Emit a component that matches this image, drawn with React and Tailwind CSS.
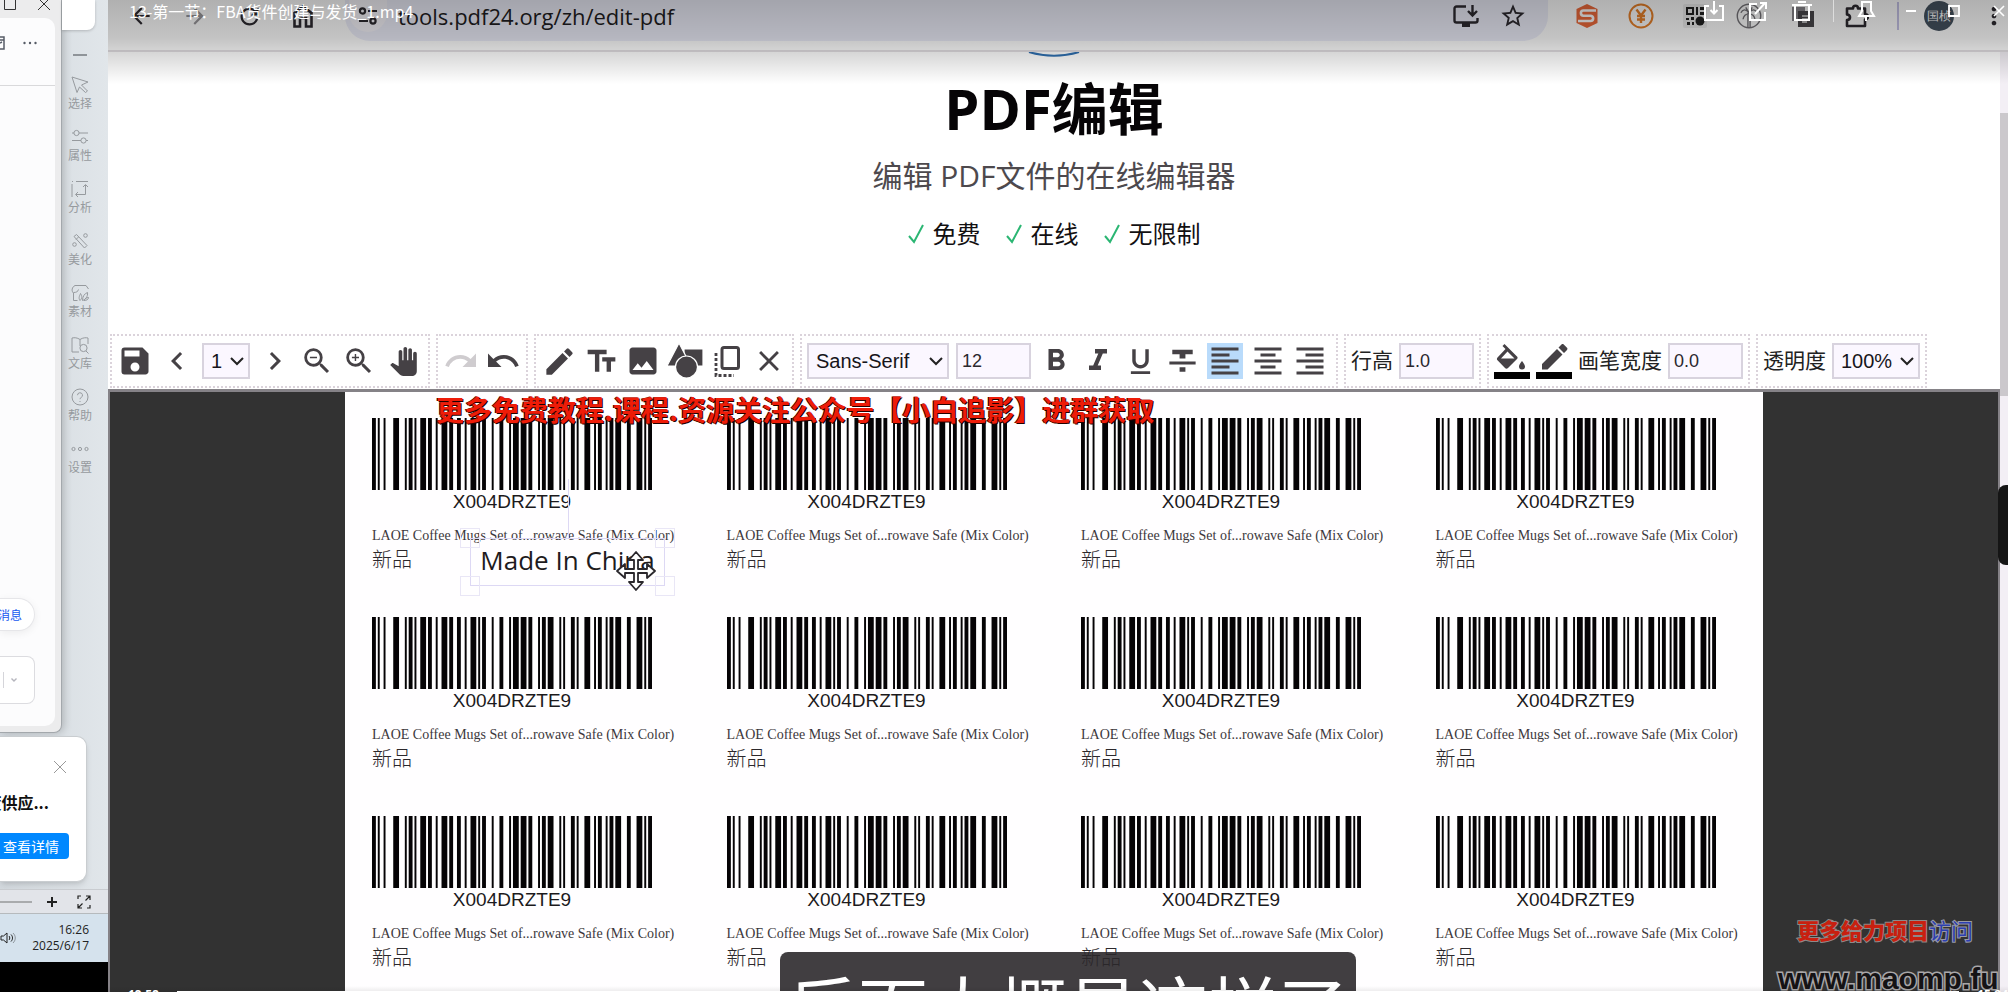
import React from "react";
import {
  MdSave, MdChevronLeft, MdChevronRight, MdZoomOut, MdZoomIn, MdRedo, MdUndo, MdEdit,
  MdTextFields, MdImage, MdClose, MdFormatBold, MdFormatItalic, MdFormatUnderlined,
  MdFormatStrikethrough, MdFormatAlignLeft, MdFormatAlignCenter, MdFormatAlignRight, MdPanTool,
  MdArrowBack, MdArrowForward, MdRefresh, MdStarBorder, MdMoreVert,
} from "react-icons/md";

const UI = "font-['Open_Sans','Noto_Sans_CJK_SC',sans-serif]";

/* ---------- left desktop strip ---------- */

const tools = [
  { label: "选择", icon: <path d="M2 2 18 7 11.500 10 17.500 16 15.500 17.500 9.500 12 7 17.500Z" /> },
  { label: "属性", icon: <><circle cx="6.500" cy="6" r="2.600" /><circle cx="13.500" cy="13.500" r="2.600" /><path d="M2 6h2M9 6h9M2 13.500h9M16 13.500h2" /></> },
  { label: "分析", icon: <><path d="M2 5v13M6 2.500h12M2 2.500h1M15.500 6v9.500H6M13 8l2.500-2.500L18 8M8 13l-2.500 2.500L8 18" /></> },
  { label: "美化", icon: <><path d="M4 5.500 6.500 3.500 17 14.500 14.500 17Z" /><path d="M8.500 6 6 8.500" /><circle cx="15.500" cy="4.500" r="1.800" /><circle cx="4.500" cy="13.500" r="1.800" /></> },
  { label: "素材", icon: <><path d="M3.500 17.500V10C1 8 2 4 5 2.500h11l2.500 3.500M3.500 9.500c3 0 4.500-1 5-3M7.500 17.500H3.500" /><path d="M10 17.500c-2-3 0-5 .5-7 2 3 1.500 5-.5 7ZM12.500 17.500c0-4 2-7 5-8 .5 4-2 7-5 8ZM14 17.500c1-2 2.500-3 4.500-3 0 2-2 3-4.500 3" /></> },
  { label: "文库", icon: <><path d="M10 4.500C7 2.500 4.500 2.500 2 3v14h7M10 4.500C13 2.500 16 2.500 18 3v6M10 4.500V11" /><circle cx="13.500" cy="13" r="3.600" /><path d="m16 16 2.500 2.500" /></> },
  { label: "帮助", icon: <><circle cx="10" cy="10" r="8" /><path d="M7.500 8.200a2.500 2.500 0 1 1 3.600 2.300c-.8.500-1.100.900-1.100 1.700M10 14v1" /></> },
  { label: "设置", icon: <><circle cx="3.500" cy="10" r="1.600" /><circle cx="10" cy="10" r="1.600" /><circle cx="16.500" cy="10" r="1.600" /></> },
];

function DesktopStrip() {
  return (
    <aside className="flex w-[108px] shrink-0 flex-col overflow-hidden bg-linear-to-r from-[#d3d9de] to-[#e1e6ea] font-['Noto_Sans_CJK_SC',sans-serif]">
      <div className="flex min-h-0 flex-1">
        <div className="flex w-[62px] shrink-0 flex-col rounded-br-lg border-r border-b border-[#a3a8ac] bg-[#ececed] pr-[6px] pb-[6px] shadow-[2px_0_8px_#0003]">
          <div className="flex h-[18px] shrink-0 items-start justify-between pr-[5px] pl-1 text-[#333]">
            <svg className="h-3 w-3" viewBox="0 0 12 12" fill="none" stroke="currentColor"><path d="M.5 0v9.500h11V0" /></svg>
            <svg className="h-3 w-3" viewBox="0 0 12 12" fill="none" stroke="currentColor"><path d="m0-2 12 12M12-2 0 10" /></svg>
          </div>
          <div className="flex flex-1 flex-col rounded-r-[10px] bg-[#fcfcfd]">
            <div className="flex h-[68px] items-center border-b border-[#d9d9db] pb-[18px]">
              <svg className="h-4 w-[6px] text-[#555b66]" viewBox="0 0 6 16" fill="none" stroke="currentColor" strokeWidth="1.500"><path d="M0 2h4v12H0M0 5h4M0 8l2-1" /></svg>
              <svg className="ml-4 h-4 w-4 text-[#555b66]" viewBox="0 0 16 16" fill="currentColor"><circle cx="2.500" cy="8" r="1.200" /><circle cx="8" cy="8" r="1.200" /><circle cx="13.500" cy="8" r="1.200" /></svg>
            </div>
            <div className="flex-1" />
            <button className="mb-[25px] flex h-[33px] w-[35px] items-center justify-end rounded-r-full border border-l-0 border-[#e6e6e9] bg-white pr-3 text-xs whitespace-nowrap text-[#1558f0] shadow-[0_2px_8px_#0001]">消息</button>
            <div className="mb-[22px] flex h-[48px] w-[35px] items-center rounded-r-lg border border-l-0 border-[#dcdce0] bg-white">
              <span className="ml-[3px] h-4 w-px bg-[#d5d5da]" />
              <svg className="ml-[7px] h-[6px] w-[6px] text-[#b5b5bd]" viewBox="0 0 6 6" fill="none" stroke="currentColor" strokeWidth="1.400"><path d="m.5 1.500 2.500 2.500L5.500 1.500" /></svg>
            </div>
          </div>
        </div>
        <div className="flex flex-1 flex-col items-start">
          <div className="h-[30px] w-[33px] shrink-0 rounded-br-lg bg-white shadow-[0_1px_3px_#0003]" />
          <span className="mt-6 ml-[11px] h-[2px] w-[14px] shrink-0 bg-[#8f9499]" />
          <nav className="mt-[19px] flex flex-col pl-[6px]">
            {tools.map((t) => (
              <button key={t.label} className="flex h-[52px] w-6 flex-col items-center text-xs leading-4 whitespace-nowrap text-[#969a9e]">
                <svg className="h-5 w-5 shrink-0" viewBox="0 0 20 20" fill="none" stroke="currentColor">{t.icon}</svg>
                {t.label}
              </button>
            ))}
          </nav>
        </div>
      </div>
      <div className="mt-[3px] flex h-[146px] w-[87px] shrink-0 flex-col overflow-hidden rounded-r-[10px] border border-l-0 border-[#c9cdd0] bg-white pt-[23px] shadow-md">
        <button aria-label="关闭" className="ml-[53px] h-[14px] w-[14px] text-[#999]">
          <svg viewBox="0 0 14 14" fill="none" stroke="currentColor"><path d="m1 1 12 12M13 1 1 13" /></svg>
        </button>
        <div className="mt-4 flex w-[49px] justify-end text-base leading-6 font-bold whitespace-nowrap text-[#111]">度供应...</div>
        <button className="mt-[19px] h-[26px] w-[69px] rounded-r bg-[#0088ff] pl-[3px] text-left text-sm whitespace-nowrap text-white">查看详情</button>
      </div>
      <div className="mt-[7px] flex h-[25px] shrink-0 items-center border-t border-b border-[#b6babd] border-t-[#c9ccd0] bg-[#e2e4e9] text-[#222]">
        <span className="h-[2px] w-8 bg-[#a9abad]" />
        <svg className="ml-[15px] h-[10px] w-[10px]" viewBox="0 0 10 10" stroke="currentColor" strokeWidth="2"><path d="M0 5h10M5 0v10" /></svg>
        <svg className="ml-[20px] h-[14px] w-[14px]" viewBox="0 0 14 14" fill="none" stroke="currentColor" strokeWidth="1.200"><path d="M1 4V1h3M9 1h4v4M13 1 8.500 5.500M1 9v4h4M1 13l4.500-4.500M10 13h3v-3" /></svg>
      </div>
      <div className={`flex h-[48px] shrink-0 items-center justify-between bg-[#d5e2ed] pr-[19px] text-[#222] ${UI}`}>
        <svg className="h-[14px] w-4" viewBox="0 0 16 14" fill="none" stroke="currentColor"><path d="M1 5h2.500L7 2v10L3.500 9H1ZM9 5c1 1 1 3 0 4M11 3.500c2 2 2 5 0 7" /><path opacity=".4" d="M13 2c3 3 3 7 0 10" /></svg>
        <div className="text-right text-[12px] leading-4 whitespace-nowrap"><div>16:26</div><div>2025/6/17</div></div>
      </div>
      <div className="h-[30px] shrink-0 bg-black" />
    </aside>
  );
}

/* ---------- browser bar ---------- */

function NavButton({ label, children, className = "" }) {
  return <button aria-label={label} className={`flex h-8 w-[54px] items-center justify-center ${className}`}>{children}</button>;
}

function BrowserBar() {
  return (
    <header className="flex h-[52px] shrink-0 items-start border-b-2 border-[#e4e0e4] bg-white pl-[6px] text-[#2d2a30]">
      <NavButton label="后退"><MdArrowBack size={26} /></NavButton>
      <NavButton label="前进" className="text-[#9a989c]"><MdArrowForward size={26} /></NavButton>
      <NavButton label="刷新"><MdRefresh size={27} /></NavButton>
      <NavButton label="主页">
        <svg className="h-6 w-6" viewBox="0 0 24 24" fill="none" stroke="currentColor" strokeWidth="2.600"><path d="M3.500 22.500V9L12 2.500 20.500 9v13.500H15V14H9v8.500Z" /></svg>
      </NavButton>
      <div className="ml-[15px] flex h-[41px] flex-1 items-center rounded-b-[25px] bg-[#edeefa] pb-[9px] pl-1">
        <span className="flex h-8 w-[38px] items-center justify-center rounded-b-full bg-[#f7f5fb]">
          <svg className="h-5 w-5" viewBox="0 0 20 20" fill="none" stroke="currentColor" strokeWidth="2.200"><circle cx="4.500" cy="5" r="2.600" /><path d="M10 5h9M1 15h9" /><circle cx="15" cy="15" r="2.600" /></svg>
        </span>
        <input aria-label="地址" defaultValue="tools.pdf24.org/zh/edit-pdf" className={`ml-[11px] min-w-0 flex-1 bg-transparent text-[22px] leading-8 text-[#1f1d22] outline-none ${UI}`} />
        <button aria-label="安装应用" className="flex w-[38px] justify-center">
          <svg className="h-[22px] w-[26px]" viewBox="0 0 26 22" fill="none" stroke="currentColor" strokeWidth="2.400"><path d="M13 1.500H3.500A2 2 0 0 0 1.500 3.500v12a2 2 0 0 0 2 2h19a2 2 0 0 0 2-2V13M19.500 0v10M15 6l4.500 4.500L24 6" /><path d="M9 20h8" strokeWidth="4" /></svg>
        </button>
        <button aria-label="收藏" className="mr-[21px] ml-[14px] flex w-[28px] justify-center"><MdStarBorder size={28} /></button>
      </div>
      <div className="ml-3 flex h-8 items-center">
        <NavButton label="S">
          <svg className="h-6 w-6" viewBox="0 0 24 24"><path fill="#ee6a3b" d="M12 0 22.500 5v14L12 24 1.500 19V5Z" /><path fill="none" stroke="#fff" strokeWidth="2.600" d="M21 6.500H8.500a2.600 2.600 0 0 0 0 5.200h7a2.600 2.600 0 0 1 0 5.300H3" /></svg>
        </NavButton>
        <NavButton label="¥">
          <svg className="h-[26px] w-[26px]" viewBox="0 0 26 26" fill="none" stroke="#e8812a" strokeWidth="2"><circle cx="13" cy="13" r="11.500" /><path strokeWidth="2.400" d="m8.500 6.500 4.500 6 4.500-6M13 12v8M9 13h8M9 16.500h8" /></svg>
        </NavButton>
        <NavButton label="二维码">
          <svg className="h-6 w-6" viewBox="0 0 24 24"><rect width="24" height="24" rx="2" fill="#eee" /><g fill="#222"><path d="M3 3h8v8H3Zm2 2v4h4V5ZM13 3h2v8h-2ZM17 3h4v3h-4ZM17 8h4v3h-4ZM3 14h3v2H3ZM8 13h3v3H8ZM4 18h3v3H4ZM9 18h2v3H9Z" fillRule="evenodd" /><circle cx="17" cy="17" r="4.500" /></g></svg>
        </NavButton>
        <NavButton label="扩展">
          <svg className="h-[26px] w-[26px]" viewBox="0 0 24 24" fill="none" stroke="#77757a" strokeWidth="1.300"><circle cx="12" cy="12" r="10.800" /><path d="M11 22.500V9M13 22.500V9M12 9C9 5 6 6 4.500 9M12 9c3-4 6-3 7.500 0M12 10c-4 0-5 2-5.500 5M12 10c4 0 5 2 5.500 5M12 9l-3-5M12 9l3-5" /></svg>
        </NavButton>
        <NavButton label="文档">
          <svg className="h-6 w-6" viewBox="0 0 24 24"><path d="M1 3h13v14H1Z" fill="#88868b" /><path d="M7 7h16v16H7Z" fill="#4a484c" /><path d="M11 12h8M11 15h8M11 18h5" stroke="#ddd" strokeWidth="1.500" /></svg>
        </NavButton>
        <NavButton label="扩展程序">
          <svg className="h-6 w-6" viewBox="0 0 24 24" fill="none" stroke="currentColor" strokeWidth="2.600" strokeLinejoin="round"><path d="M2 4.500h6C8 .8 13 .8 13 4.500h7V10c4 .3 4 5.200 0 5.500v6.500H2v-6c4-.3 4-5.200 0-5.500Z" /></svg>
        </NavButton>
        <span className="mr-[25px] ml-[13px] h-7 w-[2px] bg-[#c5c2e6]" />
        <span className="flex h-[30px] w-[30px] items-center justify-center rounded-full bg-[#45525f] text-[12px] whitespace-nowrap text-white">国桢</span>
        <button aria-label="更多" className="ml-[26px] flex w-[28px] justify-center"><MdMoreVert size={28} /></button>
      </div>
    </header>
  );
}

/* ---------- player chrome over the browser ---------- */

function PlayerTitleBar() {
  const ico = "h-5 w-5";
  const p = { viewBox: "0 0 20 20", fill: "none", stroke: "currentColor", strokeWidth: 2 };
  return (
    <div className="pointer-events-none absolute inset-x-0 top-0 flex h-[84px] items-start justify-between bg-linear-to-b from-[#0000004f] via-[#0000003c] via-45% to-transparent pl-[21px] text-white">
      <span className="text-base leading-[22px] whitespace-nowrap font-['Noto_Sans_CJK_SC',sans-serif]">13-第一节：FBA货件创建与发货_1.mp4</span>
      <div className="flex h-[22px] items-center pr-[3px]">
        <svg className={`${ico} mr-[24px]`} {...p}><path d="M5 5H1v14h18V5h-4M10 0v12M6.500 9l3.500 3.500L13.500 9" /></svg>
        <svg className={`${ico} mr-[24px]`} {...p}><path d="M9 3H2v16h15v-8M7 13 17 2M12 2h6v6" /></svg>
        <svg className={`${ico} mr-[21px]`} {...p}><path d="M0 4h20M6 1h8M3 5v14h14V5" /></svg>
        <span className="mr-[22px] h-[22px] w-px bg-[#ddd]" />
        <svg className={`${ico} mr-[30px]`} {...p}><path d="M6 1h9v9l3 5H3l3-5ZM10 15v6" /></svg>
        <svg className="mr-[32px] h-3 w-[10px]" viewBox="0 0 10 12" stroke="currentColor" strokeWidth="2"><path d="M0 6h10" /></svg>
        <svg className="mr-[33px] h-3 w-3" viewBox="0 0 12 12" fill="none" stroke="currentColor" strokeWidth="1.800"><path d="M1 1h10v10H1Z" /></svg>
        <svg className="h-3 w-3" viewBox="0 0 12 12" stroke="currentColor" strokeWidth="1.600"><path d="m1 1 10 10M11 1 1 11" /></svg>
      </div>
    </div>
  );
}

/* ---------- editor toolbar ---------- */

function Group({ children, className = "" }) {
  return <div className={`flex items-center border-2 border-dotted border-[#dbd3db] ${className}`}>{children}</div>;
}

function Tool({ label, children, className = "w-[42px]" }) {
  return <button aria-label={label} className={`flex h-9 items-center justify-center ${className}`}>{children}</button>;
}

function Select({ label, value, className, id }) {
  return (
    <span className={`relative flex h-9 items-center ${className}`}>
      <select id={id} aria-label={label} defaultValue={value} className="h-full w-full appearance-none border-2 border-[#d8d3de] bg-[#fbf7ff] pl-[7px] text-xl text-[#17151a] outline-none">
        <option>{value}</option>
      </select>
      <svg className="pointer-events-none absolute right-[6px] h-[14px] w-[14px]" viewBox="0 0 14 14" fill="none" stroke="#222" strokeWidth="2"><path d="m1 4 6 6 6-6" /></svg>
    </span>
  );
}

function Field({ id, value, label }) {
  return <input id={id} aria-label={label} defaultValue={value} className="h-9 w-[75px] border-2 border-[#d8d3de] bg-[#fbf7ff] pl-1 text-lg text-[#2b282e] outline-none" />;
}

function Toolbar() {
  return (
    <div role="toolbar" className="flex h-[54px] shrink-0 gap-[6px] pl-[2px] whitespace-nowrap text-[#454145] font-['Liberation_Sans','Noto_Sans_CJK_SC',sans-serif]">
      <Group className="px-[2px]">
        <Tool label="保存"><MdSave size={36} /></Tool>
        <Tool label="上一页"><MdChevronLeft size={36} /></Tool>
        <Select label="页码" value="1" className="mx-1 w-12" />
        <Tool label="下一页"><MdChevronRight size={36} /></Tool>
        <Tool label="缩小"><MdZoomOut size={34} /></Tool>
        <Tool label="放大"><MdZoomIn size={34} /></Tool>
        <Tool label="移动" className="w-[46px]">
          <MdPanTool size={29} />
        </Tool>
      </Group>
      <Group className="px-[2px]">
        <Tool label="重做"><MdRedo size={36} className="text-[#cfcccf]" /></Tool>
        <Tool label="撤销"><MdUndo size={36} /></Tool>
      </Group>
      <Group className="px-[2px]">
        <Tool label="绘制"><MdEdit size={35} /></Tool>
        <Tool label="文本"><MdTextFields size={35} /></Tool>
        <Tool label="图片"><MdImage size={36} /></Tool>
        <Tool label="形状">
          <svg className="h-9 w-9" viewBox="0 0 36 36" fill="currentColor" stroke="#fff" strokeWidth="1.200"><path d="M17 6h19v17H17Z" /><path d="M12 0 24 23H0Z" /><circle cx="19.500" cy="24" r="11" /></svg>
        </Tool>
        <Tool label="复制">
          <svg className="h-8 w-7" viewBox="0 0 28 32" fill="none" stroke="currentColor" strokeWidth="3"><rect x="9" y="2.500" width="16.500" height="21" rx="2" /><path d="M3 8v22.500h18" strokeDasharray="3 2" strokeWidth="2.800" /></svg>
        </Tool>
        <Tool label="删除"><MdClose size={34} /></Tool>
      </Group>
      <Group className="px-[5px]">
        <Select label="字体" value="Sans-Serif" className="w-[142px]" />
        <span className="mr-1 ml-[7px] flex"><Field label="字号" value="12" /></span>
        <Tool label="粗体"><MdFormatBold size={36} /></Tool>
        <Tool label="斜体"><MdFormatItalic size={36} /></Tool>
        <Tool label="下划线"><MdFormatUnderlined size={33} /></Tool>
        <Tool label="删除线"><MdFormatStrikethrough size={35} /></Tool>
        <Tool label="左对齐" className="w-11"><span className="flex h-9 w-9 items-center justify-center bg-[#b9dbfb]"><MdFormatAlignLeft size={36} /></span></Tool>
        <Tool label="居中"><MdFormatAlignCenter size={36} /></Tool>
        <Tool label="右对齐"><MdFormatAlignRight size={36} /></Tool>
      </Group>
      <Group className="gap-[6px] px-[5px]">
        <label htmlFor="line-height" className="text-[21px] text-[#222]">行高</label>
        <Field id="line-height" value="1.0" />
      </Group>
      <Group className="gap-[6px] px-[5px]">
        <Tool label="填充颜色" className="w-9">
          <svg className="h-9 w-9" viewBox="0 0 36 36" fill="currentColor"><path d="M23 13.500 10.500 1 8.500 3l3 3-8 8.500c-.8.900-.8 2 0 2.800l7.500 7.700c.8.900 2.100.900 3 0l9-9c.8-.8.8-1.700 0-2.500ZM7 15.500l6.500-7 7 7ZM28 18s-3 3.500-3 5.500a3 3 0 0 0 6 0c0-2-3-5.500-3-5.500Z" /><path fill="#000" d="M0 29h36v7H0Z" /></svg>
        </Tool>
        <Tool label="画笔颜色" className="w-9">
          <svg className="h-9 w-9" viewBox="0 0 36 36" fill="currentColor"><path d="M6 21 21 6l5.500 5.500L11.500 26.500H6ZM22.500 4.500l3-3c.6-.6 1.600-.6 2.200 0l3.300 3.300c.6.600.6 1.500 0 2.100l-3 3Z" /><path fill="#000" d="M0 29h36v7H0Z" /></svg>
        </Tool>
        <label htmlFor="pen-width" className="text-[21px] text-[#222]">画笔宽度</label>
        <Field id="pen-width" value="0.0" />
      </Group>
      <Group className="gap-[6px] px-[5px]">
        <label htmlFor="opacity" className="text-[21px] text-[#222]">透明度</label>
        <Select id="opacity" value="100%" className="w-[88px]" />
      </Group>
    </div>
  );
}

/* ---------- label sheet ---------- */

// Code 128 set B module widths: start, X 0 0 4 D R Z T E 9, check digit, stop.
const MODULES = "211214" + "331121" + "123122" + "123122" + "221231" + "112313" + "231131" + "312311" + "213311" + "132113" + "321122" + "112133" + "2331112";
const bars = [];
[...MODULES].reduce((x, w, i) => {
  if (i % 2 === 0) bars.push([x, +w]);
  return x + +w;
}, 0);

function Label() {
  return (
    <li className="flex h-[199px] flex-col items-start pl-[27px] whitespace-nowrap">
      <svg className="h-[72px] w-[280px] shrink-0" viewBox="0 0 145 72" preserveAspectRatio="none" fill="#050305">
        {bars.map(([x, w]) => <rect key={x} x={x} y="0" width={w} height="72" />)}
      </svg>
      <span className="w-[280px] text-center text-[19px] leading-6 text-[#1c1a1c] font-['Liberation_Sans',sans-serif]">X004DRZTE9</span>
      <span className="mt-[11px] text-sm leading-[22px] text-[#3c383c] font-['Liberation_Serif',serif]">LAOE Coffee Mugs Set of...rowave Safe (Mix Color)</span>
      <span className="text-xl leading-6 font-light text-[#2c282c] font-['Noto_Sans_CJK_SC',sans-serif]">新品</span>
    </li>
  );
}

function Handle({ className }) {
  return <span className={`absolute h-5 w-5 border border-[#e9e6f6] ${className}`} />;
}

function Canvas() {
  return (
    <div className="relative mt-px min-h-0 flex-1 overflow-hidden border-2 border-t-[3px] border-b-0 border-[#858287] bg-[#323232]">
      <ul className="mx-auto grid h-full w-[1418px] max-w-full grid-cols-4 content-start bg-[#fffeff] pt-[26px]">
        {Array.from({ length: 12 }, (_, i) => <Label key={i} />)}
      </ul>
      <p className="absolute top-0 left-[326px] text-[28px] leading-[34px] font-bold whitespace-nowrap text-[#ee1c08] [text-shadow:1px_1px_0_#200,-1px_0_0_#400] font-['Noto_Sans_CJK_SC',sans-serif]">
        更多免费教程.课程.资源关注公众号【小白追影】进群获取
      </p>
      <div className={`absolute top-[146px] left-[360px] flex h-[48px] w-[195px] items-center justify-center border border-[#ddd8f4] pb-1 text-[26px] whitespace-nowrap text-[#1e1b20] ${UI}`}>
        Made In China
        <Handle className="-top-[11px] -left-[11px]" />
        <Handle className="-top-[11px] -right-[11px]" />
        <Handle className="-bottom-[11px] -left-[11px]" />
        <Handle className="-right-[11px] -bottom-[11px]" />
        <span className="absolute bottom-full left-1/2 h-[60px] w-px bg-[#ddd8f4]" />
        <svg className="absolute top-[12px] right-[8px] h-10 w-10" viewBox="0 0 40 40" fill="#fff" stroke="#2a272c" strokeWidth="1.800" strokeLinejoin="round"><path d="m20 1 7 8h-5v9h9v-5l8 7-8 7v-5h-9v9h5l-7 8-7-8h5v-9H9v5l-8-7 8-7v5h9V9h-5Z" /></svg>
      </div>
      <div className="absolute right-0 -bottom-[7px] w-[220px] whitespace-nowrap">
        <div className="pl-[19px] text-[22px] leading-9 font-['Noto_Sans_CJK_SC',sans-serif]">
          <span className="font-black text-[#c8200f] [-webkit-text-stroke:2px_#8d8a8a] [paint-order:stroke_fill]">更多给力项目</span>
          <a href="#fun" className="text-[#2c3fb0] [-webkit-text-stroke:2px_#9a9aa5] [paint-order:stroke_fill]">访问</a>
        </div>
        <div className="mt-3 text-[30px] leading-[40px] font-bold text-[#151315] [-webkit-text-stroke:3px_#a9a7a9] [paint-order:stroke_fill] font-['Liberation_Sans',sans-serif]">www.maomp.fun</div>
      </div>
    </div>
  );
}

/* ---------- page ---------- */

const perks = ["免费", "在线", "无限制"];

export default function App() {
  return (
    <div className="flex h-screen overflow-hidden bg-white">
      <DesktopStrip />
      <main className="relative flex min-w-0 flex-1 flex-col overflow-hidden">
        <BrowserBar />
        <div className="flex min-h-0 flex-1">
          <div className="flex min-w-0 flex-1 flex-col">
            <section className={`relative flex shrink-0 flex-col items-center pt-6 pb-[84px] ${UI}`}>
              <svg className="absolute top-0 h-[5px] w-[52px]" viewBox="0 0 52 5" fill="none" stroke="#2f6fb0" strokeWidth="2"><path d="M1 0q25 7.500 50 0" /></svg>
              <h1 className="text-[56px] leading-[64px] font-bold text-[#060406]">PDF编辑</h1>
              <p className="mt-4 text-[30px] leading-10 text-[#4d494d]">编辑 PDF文件的在线编辑器</p>
              <ul className="mt-[22px] flex gap-[25px] text-2xl leading-8 text-[#121012]">
                {perks.map((t) => (
                  <li key={t} className="flex items-center gap-[9px]">
                    <svg className="h-5 w-4" viewBox="0 0 16 20" fill="none" stroke="#2bb673" strokeWidth="2"><path d="m1 12 5 6L15 1" /></svg>
                    {t}
                  </li>
                ))}
              </ul>
            </section>
            <Toolbar />
            <Canvas />
          </div>
          <div className="w-2 shrink-0 bg-[#f3eff5] pt-[61px]"><div className="h-[283px] bg-[#cbc8cc]" /></div>
        </div>
        <PlayerTitleBar />
        <div className="absolute top-[485px] right-0 h-20 w-[10px] rounded-l-lg bg-[#151515]" />
        <div className="absolute -bottom-[46px] left-1/2 flex h-[86px] w-[576px] -translate-x-[278px] items-start justify-center rounded-lg bg-[#2a272ae4] pt-3 text-[70px] leading-[84px] whitespace-nowrap text-white font-['Noto_Sans_CJK_SC',sans-serif]">
          后面大概是这样了
        </div>
        <div className="absolute inset-x-0 -bottom-[8px] flex h-[14px] items-start gap-[18px] bg-linear-to-b from-transparent to-[#00000030] pt-[2px] pl-5 text-xs leading-[14px] font-bold text-white font-['Open_Sans',sans-serif]">
          <span>19:58</span>
          <span className="mt-[3px] h-[3px] flex-1 bg-white" />
          <span>15:24</span>
        </div>
      </main>
    </div>
  );
}
